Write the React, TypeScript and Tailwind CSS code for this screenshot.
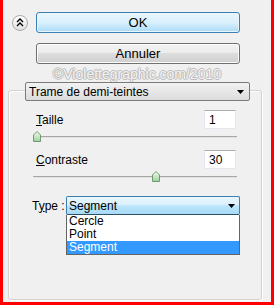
import React from "react";

const font = { fontFamily: '"Liberation Sans", Arial, sans-serif' };

function Thumb() {
  return (
    <svg width="8" height="11" viewBox="0 0 8 11">
      <defs>
        <linearGradient id="tg" x1="0" y1="0" x2="0" y2="1">
          <stop offset="0" stopColor="#f4fbf4" />
          <stop offset="1" stopColor="#9fd09f" />
        </linearGradient>
      </defs>
      <polygon points="4,0.5 7.5,4 7.5,10.5 0.5,10.5 0.5,4" fill="url(#tg)" stroke="#6f9a6f" strokeWidth="1" />
    </svg>
  );
}

function Slider({ pos }: { pos: number }) {
  return (
    <div className="relative h-[12px] ml-[24px] w-[204px]">
      <div className="absolute left-0 right-0 top-[5px] h-[2px] border-t border-[#a6a6a6] border-b-white rounded-l-[2px] bg-[#e3e3e3]" />
      <div className="absolute top-0" style={{ left: pos }}>
        <Thumb />
      </div>
    </div>
  );
}

function Arrow() {
  return (
    <svg width="7" height="4" viewBox="0 0 7 4">
      <polygon points="0,0 7,0 3.5,4" fill="#000" />
    </svg>
  );
}

export default function App() {
  return (
    <div className="w-[274px] h-[305px] bg-[#ff0000] pl-[3px] pr-[3px] pb-[3px] flex" style={font}>
      <div className="relative flex-1 bg-[#f0f0f0] flex flex-col pt-[12px] text-[12px] text-black">
        <div className="flex items-center pl-[9px]">
          <div className="w-[16px] h-[16px] rounded-full border border-[#a9a9a9] bg-gradient-to-b from-white to-[#e2e2e2] flex items-center justify-center">
            <svg width="8" height="9" viewBox="0 0 8 9">
              <path d="M1 4 L4 1 L7 4 M1 8 L4 5 L7 8" fill="none" stroke="#000" strokeWidth="1.4" />
            </svg>
          </div>
          <button className="ml-[8px] w-[204px] h-[21px] rounded-[3px] border border-[#3c7fb1] bg-gradient-to-b from-[#eaf6fd] via-[#d9f0fc] to-[#a9dbf6] shadow-[inset_0_0_0_1px_#e9f6fd] text-[13px] flex items-center justify-center">
            OK
          </button>
        </div>
        <div className="pl-[33px] mt-[10px]">
          <button className="w-[204px] h-[21px] rounded-[3px] border border-[#707070] bg-[linear-gradient(#f2f2f2_0%,#ebebeb_50%,#dddddd_50%,#cfcfcf_100%)] shadow-[inset_0_0_0_1px_#fcfcfc] text-[13px] flex items-center justify-center">
            Annuler
          </button>
        </div>
        <div className="absolute top-[64px] left-0 right-0 text-center text-[14px] text-[#f2f2f2] [text-shadow:1px_0_#bcbcbc,-1px_0_#bcbcbc,0_1px_#bcbcbc,0_-1px_#bcbcbc]">
          ©Violettegraphic.com/2010
        </div>
        <div className="relative mt-[26px] ml-[5px] w-[254px] flex-1 mb-[2px] border border-[#d3d3d3] rounded-[3px] shadow-[inset_1px_1px_0_#ffffff,1px_1px_0_#ffffff]">
          <div className="-mt-[9px] ml-[16px] w-[225px] h-[19px] border border-[#7a7a7a] rounded-[2px] bg-gradient-to-b from-[#f2f2f2] to-[#dcdcdc] flex items-center pl-[3px] pr-[5px] justify-between">
            <span>Trame de demi-teintes</span>
            <Arrow />
          </div>
          <div className="flex items-center mt-[9px] h-[19px] pl-[27px]">
            <span className="flex-1"><span className="underline">T</span>aille</span>
            <div className="w-[32px] h-[19px] mr-[25px] bg-white border border-[#e3e9ef] border-t-[#abadb3] pl-[4px] flex items-center">1</div>
          </div>
          <div className="mt-[2px]">
            <Slider pos={0} />
          </div>
          <div className="flex items-center mt-[7px] h-[19px] pl-[27px]">
            <span className="flex-1"><span className="underline">C</span>ontraste</span>
            <div className="w-[32px] h-[19px] mr-[25px] bg-white border border-[#e3e9ef] border-t-[#abadb3] pl-[4px] flex items-center">30</div>
          </div>
          <div className="mt-[2px]">
            <Slider pos={119} />
          </div>
          <div className="relative flex items-center mt-[13px] h-[19px] pl-[23px]">
            <span className="w-[34px]">T<span className="underline">y</span>pe :</span>
            <div className="w-[174px] h-[19px] border border-[#3c7fb1] border-b-[#2c4f6b] rounded-[2px] bg-[linear-gradient(#eaf6fd_0%,#d9f0fc_50%,#bee6fd_50%,#a7d9f5_100%)] flex items-center justify-between pl-[2px] pr-[4px]">
              <span>Segment</span>
              <Arrow />
            </div>
            <div className="absolute left-[57px] top-[19px] w-[174px] bg-white border border-[#646464] border-t-0 flex flex-col">
              <div className="h-[13px] leading-[13px] pl-[2px]">Cercle</div>
              <div className="h-[13px] leading-[13px] pl-[2px]">Point</div>
              <div className="h-[13px] leading-[13px] pl-[2px] bg-[#3399ff] text-white">Segment</div>
            </div>
          </div>
        </div>
      </div>
    </div>
  );
}
